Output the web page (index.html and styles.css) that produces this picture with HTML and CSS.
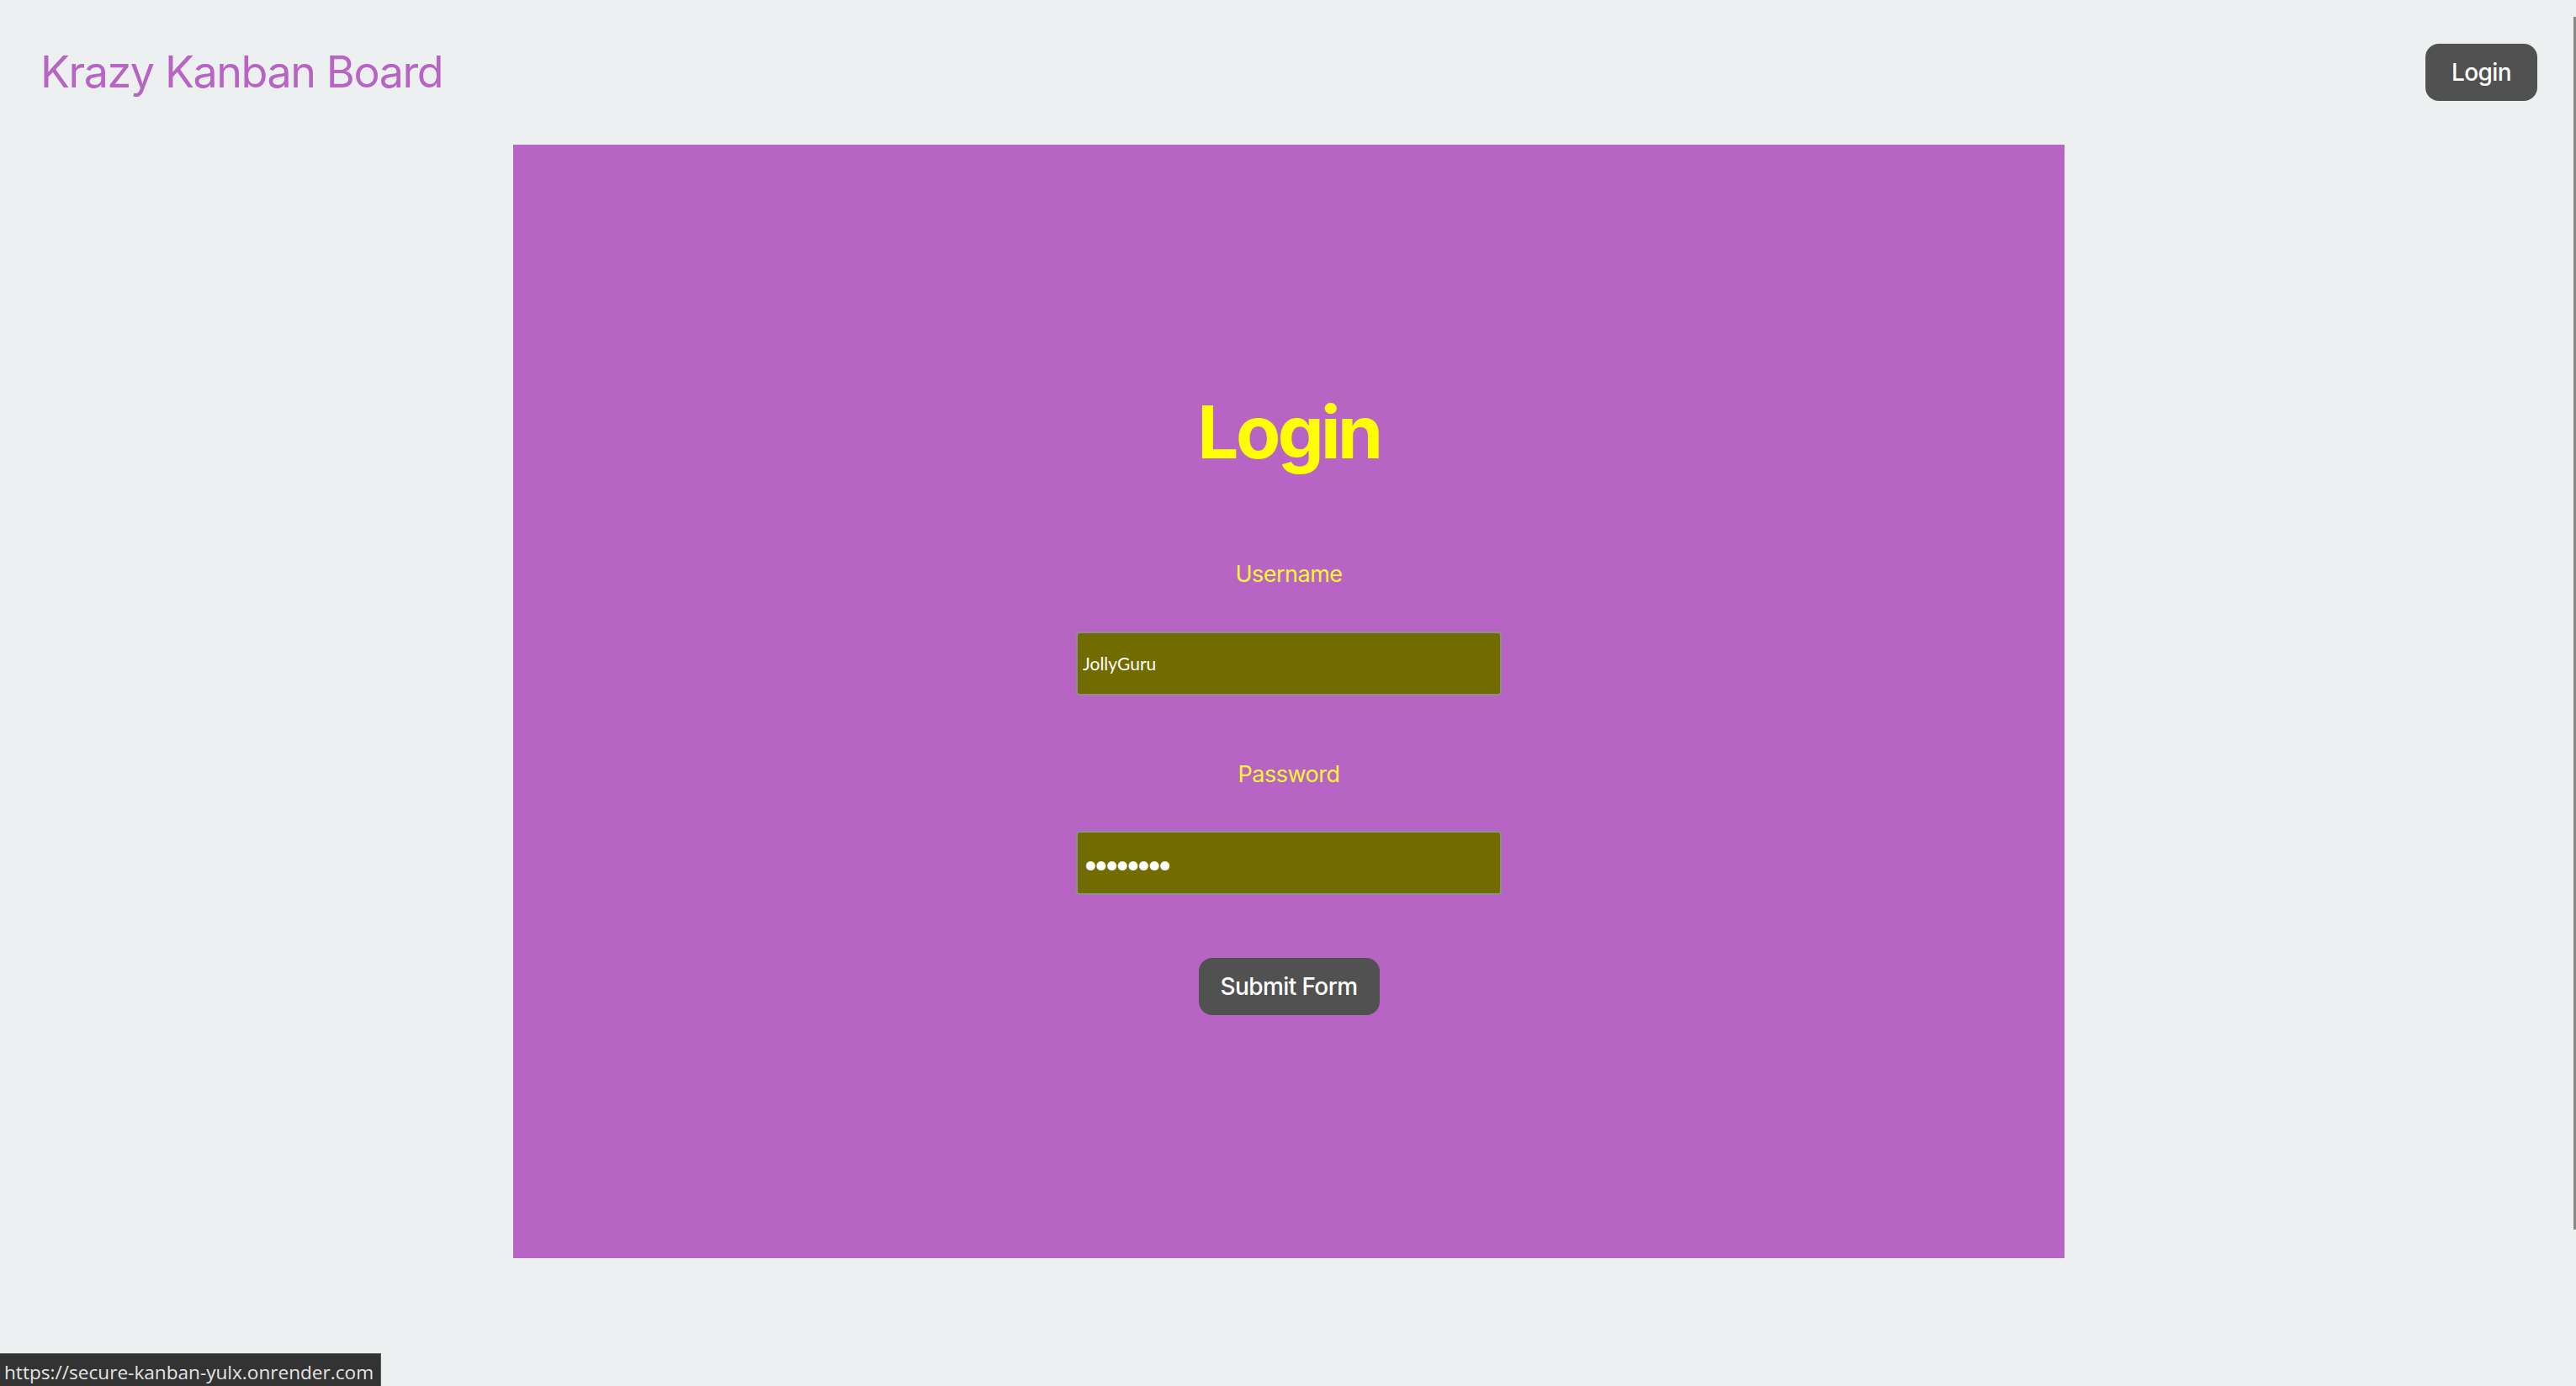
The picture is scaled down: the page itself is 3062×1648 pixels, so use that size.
FILE: index.html
```html
<!DOCTYPE html>
<html lang="en">
<head>
<meta charset="utf-8">
<title>Krazy Kanban Board</title>
<link rel="stylesheet" href="styles.css">
</head>
<body>
<header class="nav">
  <h1 class="brand">Krazy Kanban Board</h1>
  <button class="nav-btn" type="button">Login</button>
</header>
<main class="panel">
  <form class="login-form">
    <h2 class="form-title">Login</h2>
    <label class="field-label" for="username">Username</label>
    <input class="field-input" id="username" type="text" value="JollyGuru">
    <label class="field-label" for="password">Password</label>
    <input class="field-input pw" id="password" type="password" value="password">
    <button class="submit-btn" type="button">Submit Form</button>
  </form>
</main>
<div class="status-bar">https://secure-kanban-yulx.onrender.com</div>
<div class="scroll-thumb"></div>
</body>
</html>
```
FILE: styles.css
```css
html, body {
  margin: 0;
  padding: 0;
  background: #ecf0f1;
  font-family: Inter, "Noto Sans", sans-serif;
  overflow: hidden;
}
body {
  height: 1648px;
}
.nav {
  height: 172px;
  display: flex;
  align-items: center;
  justify-content: space-between;
  padding: 0 46px 0 48px;
  box-sizing: border-box;
}
.brand {
  margin: 0;
  font-size: 52px;
  font-weight: 400;
  line-height: 1.21;
  color: #b864c4;
  letter-spacing: -1.4px;
}
.nav-btn {
  width: 133px;
  height: 68px;
  border: none;
  border-radius: 16px;
  background: #515151;
  color: #ffffff;
  font-family: Inter, sans-serif;
  font-size: 28px;
  font-weight: 500;
  letter-spacing: -0.6px;
  padding: 0;
}
.panel {
  width: 1844px;
  height: 1324px;
  margin: 0 auto;
  padding-left: 0;
  background: #b864c4;
  display: flex;
  align-items: center;
  justify-content: center;
  position: relative;
  left: 1px;
}
.login-form {
  display: flex;
  flex-direction: column;
  align-items: center;
}
.form-title {
  margin: 0 0 101px;
  font-size: 87px;
  font-weight: 700;
  line-height: 1.21;
  color: #ffff00;
  letter-spacing: -3.6px;
}
.field-label {
  font-size: 27px;
  line-height: 1.21;
  color: #fff533;
  letter-spacing: -0.5px;
  margin-bottom: 51px;
}
.field-input {
  width: 506px;
  height: 76px;
  box-sizing: border-box;
  border: 2px solid #8e8e8e;
  border-radius: 4px;
  background: #716b00;
  color: #ffffff;
  font-family: Lato, sans-serif;
  font-size: 21px;
  padding: 0 6px;
  margin-bottom: 78px;
  outline: none;
}
.field-input.pw {
  margin-bottom: 75px;
  font-size: 29px;
  letter-spacing: -4.2px;
  padding-left: 7px;
}
.submit-btn {
  width: 215px;
  height: 68px;
  border: none;
  border-radius: 16px;
  background: #515151;
  color: #ffffff;
  font-family: Inter, sans-serif;
  font-size: 28px;
  font-weight: 500;
  letter-spacing: -0.6px;
  padding: 0;
}
.status-bar {
  position: fixed;
  left: 0;
  bottom: 0;
  width: 453px;
  height: 39px;
  box-sizing: border-box;
  background: #333333;
  border-top: 1px solid #5a5a5a;
  border-right: 1px solid #5a5a5a;
  color: #e4e4e4;
  font-family: "Open Sans", "Noto Sans", sans-serif;
  font-size: 22.6px;
  line-height: 37px;
  padding: 3px 0 0 5px;
  white-space: nowrap;
}
.scroll-thumb {
  position: fixed;
  right: 0;
  top: 20px;
  width: 3px;
  height: 1442px;
  background: #888888;
}
```
